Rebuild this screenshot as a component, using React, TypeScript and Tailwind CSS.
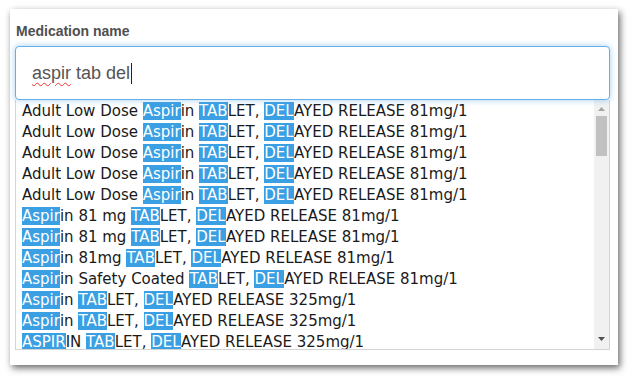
import React from "react";

type Seg = { t: string; h?: boolean };

const rows: Seg[][] = [
  ...Array.from({ length: 5 }, () => [
    { t: "Adult Low Dose " },
    { t: "Aspir", h: true },
    { t: "in " },
    { t: "TAB", h: true },
    { t: "LET, " },
    { t: "DEL", h: true },
    { t: "AYED RELEASE 81mg/1" },
  ]),
  ...Array.from({ length: 2 }, () => [
    { t: "Aspir", h: true },
    { t: "in 81 mg " },
    { t: "TAB", h: true },
    { t: "LET, " },
    { t: "DEL", h: true },
    { t: "AYED RELEASE 81mg/1" },
  ]),
  [
    { t: "Aspir", h: true },
    { t: "in 81mg " },
    { t: "TAB", h: true },
    { t: "LET, " },
    { t: "DEL", h: true },
    { t: "AYED RELEASE 81mg/1" },
  ],
  [
    { t: "Aspir", h: true },
    { t: "in Safety Coated " },
    { t: "TAB", h: true },
    { t: "LET, " },
    { t: "DEL", h: true },
    { t: "AYED RELEASE 81mg/1" },
  ],
  ...Array.from({ length: 2 }, () => [
    { t: "Aspir", h: true },
    { t: "in " },
    { t: "TAB", h: true },
    { t: "LET, " },
    { t: "DEL", h: true },
    { t: "AYED RELEASE 325mg/1" },
  ]),
  [
    { t: "ASPIR", h: true },
    { t: "IN " },
    { t: "TAB", h: true },
    { t: "LET, " },
    { t: "DEL", h: true },
    { t: "AYED RELEASE 325mg/1" },
  ],
];

export default function App() {
  return (
    <div className="w-[634px] h-[381px] bg-white overflow-hidden pt-[9px] pl-[10px]">
      <div className="w-[608px] h-[356px] bg-white shadow-[2px_3px_7px_rgba(0,0,0,0.6)] pl-[5px] pr-[8px] pt-[12px] font-['Liberation_Sans',Arial,sans-serif]">
        <div className="pl-[1px] text-[14px] leading-[20px] font-bold text-[#4f4f4f] h-[20px] mb-[5px]">
          Medication name
        </div>
        <div className="w-[595px] h-[54px] rounded-[4px] border border-[#66afe9] shadow-[0_0_6px_rgba(102,175,233,0.6)] bg-white flex items-center pl-[16px] text-[18px] text-[#555] relative z-10">
          <span className="underline decoration-wavy decoration-[#e33] decoration-1 underline-offset-[3px]">aspir</span>
          <span className="whitespace-pre"> tab del</span>
          <span className="inline-block w-[1px] h-[21px] bg-[#222] ml-[1px]" />
        </div>
        <div className="relative h-[264px]">
          <div className="flex flex-col">
            <div className="h-[118px] border-b border-[#dddddd]" />
            <div className="h-[37px] border-b border-[#dddddd]" />
            <div className="h-[42px] border-b border-[#dddddd]" />
            <div className="h-[36px] border-b border-[#dddddd]" />
          </div>
          <div className="absolute top-0 left-0 w-[595px] h-[250px] bg-white border-l border-r border-b border-[#d4d4d4] flex font-['DejaVu_Sans',Verdana,sans-serif]">
            <div className="flex-1 overflow-hidden pl-[6px] pt-[1px] text-[15px] leading-[21px] text-[#1a1a1a]">
              {rows.map((r, i) => (
                <div key={i} className="h-[21px] whitespace-pre">
                  {r.map((s, j) =>
                    s.h ? (
                      <span key={j} className="bg-[#3a9fe3] text-white">
                        {s.t}
                      </span>
                    ) : (
                      <span key={j}>{s.t}</span>
                    )
                  )}
                </div>
              ))}
            </div>
            <div className="w-[15px] bg-[#f1f1f1] flex flex-col items-center">
              <div className="h-[16px] flex items-center justify-center pt-[2px]">
                <svg width="7" height="4" viewBox="0 0 7 4">
                  <polygon points="0,4 7,4 3.5,0" fill="#a3a3a3" />
                </svg>
              </div>
              <div className="w-[11px] h-[40px] bg-[#c1c1c1] mt-[0px]" />
              <div className="flex-1" />
              <div className="h-[16px] flex items-center justify-center pb-[4px]">
                <svg width="7" height="4" viewBox="0 0 7 4">
                  <polygon points="0,0 7,0 3.5,4" fill="#505050" />
                </svg>
              </div>
            </div>
          </div>
        </div>
      </div>
    </div>
  );
}
